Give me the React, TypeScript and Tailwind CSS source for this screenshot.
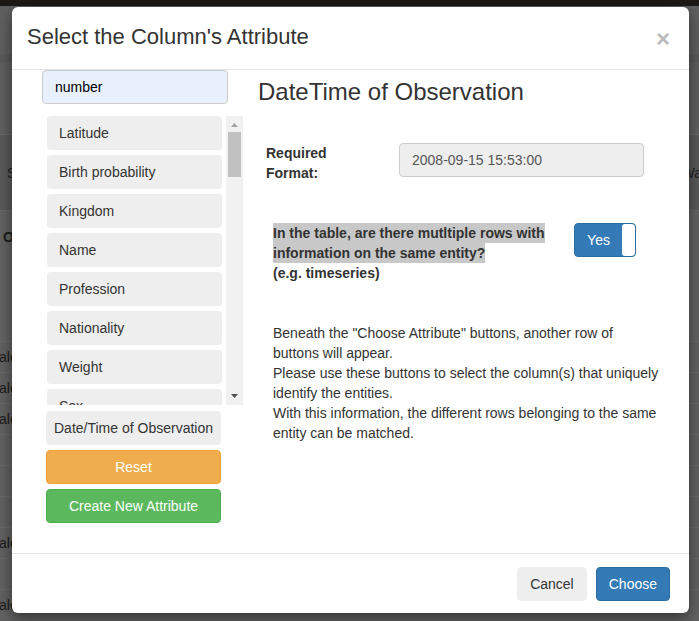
const attributes = ['Latitude', 'Birth probability', 'Kingdom', 'Name', 'Profession', 'Nationality', 'Weight', 'Sex'];

const helpLines = [
  'Beneath the "Choose Attribute" buttons, another row of',
  'buttons will appear.',
  'Please use these buttons to select the column(s) that uniquely',
  'identify the entities.',
  'With this information, the different rows belonging to the same',
  'entity can be matched.',
];

// dimmed page that sits behind the modal
function Backdrop() {
  const tableRows = ['ale', 'ale', 'ale', '', '', '', 'ale', '', 'ale'];
  return (
    <div className="flex h-full w-full flex-col text-[#1c1c1c]">
      <div className="h-[6px] bg-[#1e1914]" />
      <div className="h-[48px] bg-[#606060]" />
      <div className="h-[8px] bg-[#5a5a5a]" />
      <div className="h-[73px] border-b border-[#6a6a6a] bg-[#606060]" />
      <div className="flex h-[76px] items-center justify-between border-b border-[#6a6a6a] bg-[#5a5a5a] px-[7px]">
        <span>S</span>
        <span className="-mr-[10px]">Wa</span>
      </div>
      <div className="h-[130px] bg-[#636363] pl-[3px] pt-[16px] font-bold">O</div>
      {tableRows.map((t, i) => (
        <div key={i} className="flex h-[31px] items-center border-t border-[#6a6a6a] bg-[#626262] -ml-[1px]">
          {t}
        </div>
      ))}
    </div>
  );
}

function ScrollBar() {
  return (
    <div className="ml-[4px] flex h-full w-[17px] flex-col items-center bg-[#f1f1f1]">
      <svg width="7" height="4" viewBox="0 0 7 4" className="mt-[7px]">
        <polygon points="3.5,0 7,4 0,4" fill="#a3a3a3" />
      </svg>
      <div className="mt-[5px] h-[45px] w-[13px] bg-[#c1c1c1]" />
      <div className="flex-1" />
      <svg width="7" height="4" viewBox="0 0 7 4" className="mb-[7px]">
        <polygon points="0,0 7,0 3.5,4" fill="#505050" />
      </svg>
    </div>
  );
}

export default function App() {
  return (
    <div className="relative h-[621px] w-[699px] overflow-hidden bg-[#606060] font-['Liberation_Sans',Arial,sans-serif] text-[14px] leading-5 text-[#333]">
      <Backdrop />

      <div className="absolute left-[12px] top-[7px] flex h-[606px] w-[677px] flex-col rounded-[6px] bg-white shadow-[0_5px_15px_rgba(0,0,0,0.5)]">
        {/* header */}
        <div className="flex h-[63px] items-center justify-between border-b border-[#e5e5e5] pb-[3px] pl-[15px] pr-[19px]">
          <h4 className="text-[22px] leading-[24px] text-[#333]">Select the Column's Attribute</h4>
          <span className="mt-[4px] text-[24px] font-bold leading-none text-[#bbb]">×</span>
        </div>

        {/* body */}
        <div className="flex h-[483px]">
          <div className="w-[231px] pl-[30px]">
            <div className="flex h-[34px] w-[186px] items-center rounded-[4px] border border-[#ccc] bg-[#e8f0fe] px-[12px] text-black">
              number
            </div>

            <div className="ml-[5px] mt-[12px] flex h-[289px]">
              <div className="flex w-[175px] flex-col gap-[5px] overflow-hidden">
                {attributes.map(a => (
                  <div key={a} className="flex h-[34px] shrink-0 items-center rounded-[4px] bg-[#eee] px-[12px]">
                    {a}
                  </div>
                ))}
              </div>
              <ScrollBar />
            </div>

            <div className="ml-[4px] w-[175px]">
              <div className="mt-[6px] flex h-[34px] items-center justify-center rounded-[4px] bg-[#eee]">
                Date/Time of Observation
              </div>
              <div className="mt-[5px] flex h-[34px] items-center justify-center rounded-[4px] border border-[#eea236] bg-[#f0ad4e] text-white">
                Reset
              </div>
              <div className="mt-[5px] flex h-[34px] items-center justify-center rounded-[4px] border border-[#4cae4c] bg-[#5cb85c] text-white">
                Create New Attribute
              </div>
            </div>
          </div>

          <div className="flex-1 pl-[15px]">
            <h3 className="mt-[9px] text-[24px] leading-[26px] text-[#333]">DateTime of Observation</h3>

            <div className="mt-[38px] flex">
              <label className="ml-[8px] w-[133px] font-bold">
                Required
                <br />
                Format:
              </label>
              <div className="flex h-[34px] w-[245px] items-center rounded-[4px] border border-[#ccc] bg-[#eee] px-[12px] text-[#555]">
                2008-09-15 15:53:00
              </div>
            </div>

            <div className="mt-[40px] flex pl-[15px]">
              <div className="w-[301px] font-bold">
                <div className="w-fit bg-[#c8c8c8]">In the table, are there mutltiple rows with</div>
                <div className="w-fit bg-[#c8c8c8]">information on the same entity?</div>
                <div>(e.g. timeseries)</div>
              </div>
              <div className="flex h-[34px] w-[62px] overflow-hidden rounded-[4px] border border-[#2e6da4] bg-[#337ab7]">
                <div className="flex flex-1 items-center justify-center text-white">Yes</div>
                <div className="w-[13px] rounded-[3px] bg-white" />
              </div>
            </div>

            <p className="mt-[40px] pl-[15px]">
              {helpLines.map((l, i) => (
                <span key={i}>
                  {l}
                  <br />
                </span>
              ))}
            </p>
          </div>
        </div>

        {/* footer */}
        <div className="flex h-[60px] items-center justify-end gap-[9px] border-t border-[#e5e5e5] pr-[19px]">
          <button className="h-[34px] rounded-[4px] border border-[#eee] bg-[#eee] px-[12px] text-[#333]">Cancel</button>
          <button className="h-[34px] rounded-[4px] border border-[#2e6da4] bg-[#337ab7] px-[12px] text-white">Choose</button>
        </div>
      </div>
    </div>
  );
}
